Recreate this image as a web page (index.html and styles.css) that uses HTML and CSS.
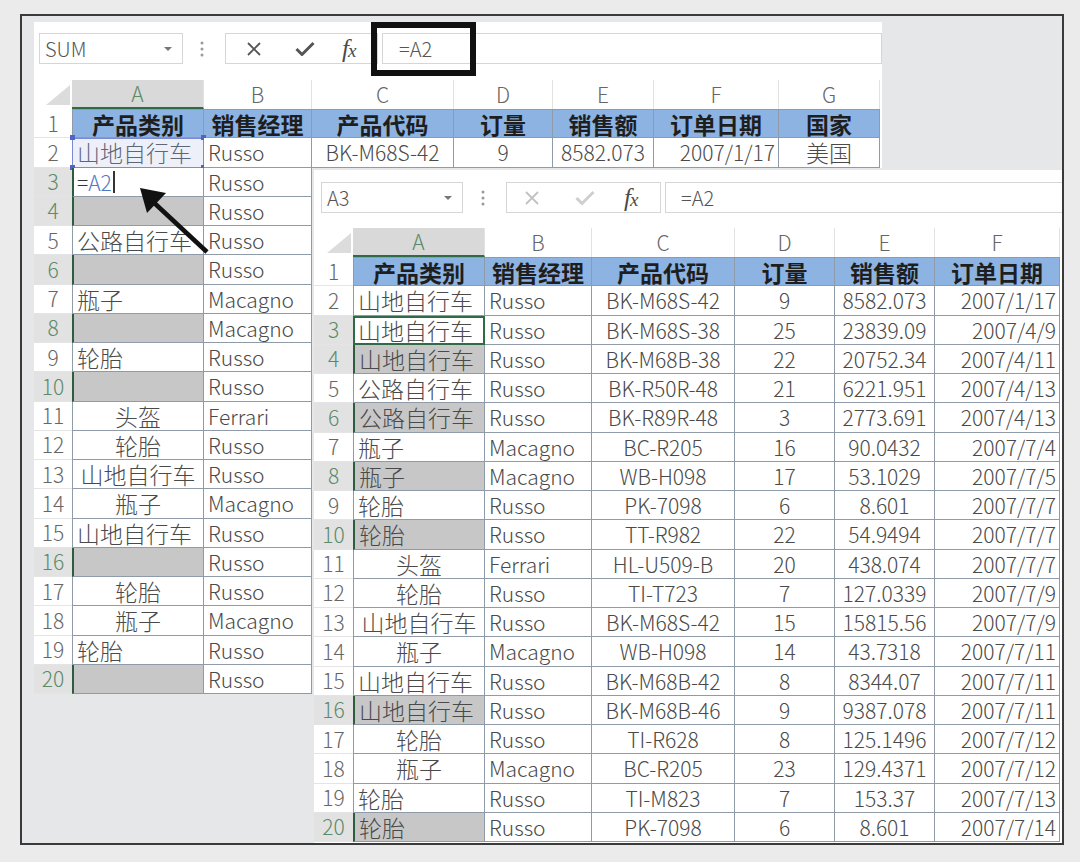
FILE: index.html
```html
<!DOCTYPE html>
<html lang="zh-CN">
<head>
<meta charset="utf-8">
<title>Excel</title>
<link rel="stylesheet" href="styles.css">
</head>
<body>
<div class="frame">
  <div class="sheet1">
    <div class="head">
      <div class="fbar">
        <div class="namebox nb1">SUM<span class="dd"></span></div>
        <svg class="dots d1" width="4" height="16" viewBox="0 0 4 16"><circle cx="2" cy="2" r="1.5"/><circle cx="2" cy="8" r="1.5"/><circle cx="2" cy="14" r="1.5"/></svg>
        <div class="fxbox fx1">
          <svg class="ic-x" width="16" height="16" viewBox="0 0 16 16"><path d="M2 2L14 14M14 2L2 14"/></svg>
          <svg class="ic-ok" width="20" height="16" viewBox="0 0 20 16"><path d="M1.5 8L7 13.5L18.5 2"/></svg>
          <span class="fx">f<span class="fxx">x</span></span>
        </div>
        <div class="finput fi1">=A2</div>
      </div>
      <div class="colhead cols1">
        <div class="corner"></div><div class="h sel">A</div><div class="h">B</div><div class="h">C</div><div class="h">D</div><div class="h">E</div><div class="h">F</div><div class="h">G</div>
      </div>
    </div>
    <div class="r cols1 full"><div class="n">1</div><div class="c th a">产品类别</div><div class="c th">销售经理</div><div class="c th">产品代码</div><div class="c th">订量</div><div class="c th">销售额</div><div class="c th">订单日期</div><div class="c th">国家</div></div>
    <div class="r cols1 full"><div class="n">2</div><div class="c a ref">山地自行车<i class="hd tl"></i><i class="hd tr"></i><i class="hd bl"></i><i class="hd br"></i></div><div class="c e">Russo</div><div class="c e ctr">BK-M68S-42</div><div class="c e ctr">9</div><div class="c e ctr">8582.073</div><div class="c e rt">2007/1/17</div><div class="c ctr">美国</div></div>
    <div class="r cols1"><div class="n s">3</div><div class="c a edit">=<span class="refc">A2</span><span class="caret"></span></div><div class="c e">Russo</div></div>
    <div class="r cols1"><div class="n s">4</div><div class="c a g"></div><div class="c e">Russo</div></div>
    <div class="r cols1"><div class="n">5</div><div class="c a">公路自行车</div><div class="c e">Russo</div></div>
    <div class="r cols1"><div class="n s">6</div><div class="c a g"></div><div class="c e">Russo</div></div>
    <div class="r cols1"><div class="n">7</div><div class="c a">瓶子</div><div class="c e">Macagno</div></div>
    <div class="r cols1"><div class="n s">8</div><div class="c a g"></div><div class="c e">Macagno</div></div>
    <div class="r cols1"><div class="n">9</div><div class="c a">轮胎</div><div class="c e">Russo</div></div>
    <div class="r cols1"><div class="n s">10</div><div class="c a g"></div><div class="c e">Russo</div></div>
    <div class="r cols1"><div class="n">11</div><div class="c a ctr">头盔</div><div class="c e">Ferrari</div></div>
    <div class="r cols1"><div class="n">12</div><div class="c a ctr">轮胎</div><div class="c e">Russo</div></div>
    <div class="r cols1"><div class="n">13</div><div class="c a ctr">山地自行车</div><div class="c e">Russo</div></div>
    <div class="r cols1"><div class="n">14</div><div class="c a ctr">瓶子</div><div class="c e">Macagno</div></div>
    <div class="r cols1"><div class="n">15</div><div class="c a">山地自行车</div><div class="c e">Russo</div></div>
    <div class="r cols1"><div class="n s">16</div><div class="c a g"></div><div class="c e">Russo</div></div>
    <div class="r cols1"><div class="n">17</div><div class="c a ctr">轮胎</div><div class="c e">Russo</div></div>
    <div class="r cols1"><div class="n">18</div><div class="c a ctr">瓶子</div><div class="c e">Macagno</div></div>
    <div class="r cols1"><div class="n">19</div><div class="c a">轮胎</div><div class="c e">Russo</div></div>
    <div class="r cols1"><div class="n s">20</div><div class="c a g"></div><div class="c e">Russo</div></div>

    <div class="ann"></div>
    <svg class="arrow" width="300" height="260" viewBox="0 0 300 260">
      <path d="M173 230L116 177" stroke="#111" stroke-width="4.5" fill="none"/>
      <path d="M106 166L113 191L132 171Z" fill="#111"/>
    </svg>
  </div>

  <div class="sheet2">
    <div class="head h2">
      <div class="fbar">
        <div class="namebox nb2">A3<span class="dd"></span></div>
        <svg class="dots d2" width="4" height="16" viewBox="0 0 4 16"><circle cx="2" cy="2" r="1.5"/><circle cx="2" cy="8" r="1.5"/><circle cx="2" cy="14" r="1.5"/></svg>
        <div class="fxbox fx2">
          <svg class="ic-x off" width="16" height="16" viewBox="0 0 16 16"><path d="M2 2L14 14M14 2L2 14"/></svg>
          <svg class="ic-ok off" width="20" height="16" viewBox="0 0 20 16"><path d="M1.5 8L7 13.5L18.5 2"/></svg>
          <span class="fx">f<span class="fxx">x</span></span>
        </div>
        <div class="finput fi2">=A2</div>
      </div>
      <div class="colhead cols2">
        <div class="corner"></div><div class="h sel">A</div><div class="h">B</div><div class="h">C</div><div class="h">D</div><div class="h">E</div><div class="h">F</div>
      </div>
    </div>
    <div class="r cols2"><div class="n">1</div><div class="c th a">产品类别</div><div class="c th">销售经理</div><div class="c th">产品代码</div><div class="c th">订量</div><div class="c th">销售额</div><div class="c th">订单日期</div></div>
    <div class="r cols2"><div class="n">2</div><div class="c a">山地自行车</div><div class="c e">Russo</div><div class="c e ctr">BK-M68S-42</div><div class="c e ctr">9</div><div class="c e ctr">8582.073</div><div class="c e rt">2007/1/17</div></div>
    <div class="r cols2"><div class="n s">3</div><div class="c a act">山地自行车</div><div class="c e">Russo</div><div class="c e ctr">BK-M68S-38</div><div class="c e ctr">25</div><div class="c e ctr">23839.09</div><div class="c e rt">2007/4/9</div></div>
    <div class="r cols2"><div class="n s">4</div><div class="c a g">山地自行车</div><div class="c e">Russo</div><div class="c e ctr">BK-M68B-38</div><div class="c e ctr">22</div><div class="c e ctr">20752.34</div><div class="c e rt">2007/4/11</div></div>
    <div class="r cols2"><div class="n">5</div><div class="c a">公路自行车</div><div class="c e">Russo</div><div class="c e ctr">BK-R50R-48</div><div class="c e ctr">21</div><div class="c e ctr">6221.951</div><div class="c e rt">2007/4/13</div></div>
    <div class="r cols2"><div class="n s">6</div><div class="c a g">公路自行车</div><div class="c e">Russo</div><div class="c e ctr">BK-R89R-48</div><div class="c e ctr">3</div><div class="c e ctr">2773.691</div><div class="c e rt">2007/4/13</div></div>
    <div class="r cols2"><div class="n">7</div><div class="c a">瓶子</div><div class="c e">Macagno</div><div class="c e ctr">BC-R205</div><div class="c e ctr">16</div><div class="c e ctr">90.0432</div><div class="c e rt">2007/7/4</div></div>
    <div class="r cols2"><div class="n s">8</div><div class="c a g">瓶子</div><div class="c e">Macagno</div><div class="c e ctr">WB-H098</div><div class="c e ctr">17</div><div class="c e ctr">53.1029</div><div class="c e rt">2007/7/5</div></div>
    <div class="r cols2"><div class="n">9</div><div class="c a">轮胎</div><div class="c e">Russo</div><div class="c e ctr">PK-7098</div><div class="c e ctr">6</div><div class="c e ctr">8.601</div><div class="c e rt">2007/7/7</div></div>
    <div class="r cols2"><div class="n s">10</div><div class="c a g">轮胎</div><div class="c e">Russo</div><div class="c e ctr">TT-R982</div><div class="c e ctr">22</div><div class="c e ctr">54.9494</div><div class="c e rt">2007/7/7</div></div>
    <div class="r cols2"><div class="n">11</div><div class="c a ctr">头盔</div><div class="c e">Ferrari</div><div class="c e ctr">HL-U509-B</div><div class="c e ctr">20</div><div class="c e ctr">438.074</div><div class="c e rt">2007/7/7</div></div>
    <div class="r cols2"><div class="n">12</div><div class="c a ctr">轮胎</div><div class="c e">Russo</div><div class="c e ctr">TI-T723</div><div class="c e ctr">7</div><div class="c e ctr">127.0339</div><div class="c e rt">2007/7/9</div></div>
    <div class="r cols2"><div class="n">13</div><div class="c a ctr">山地自行车</div><div class="c e">Russo</div><div class="c e ctr">BK-M68S-42</div><div class="c e ctr">15</div><div class="c e ctr">15815.56</div><div class="c e rt">2007/7/9</div></div>
    <div class="r cols2"><div class="n">14</div><div class="c a ctr">瓶子</div><div class="c e">Macagno</div><div class="c e ctr">WB-H098</div><div class="c e ctr">14</div><div class="c e ctr">43.7318</div><div class="c e rt">2007/7/11</div></div>
    <div class="r cols2"><div class="n">15</div><div class="c a">山地自行车</div><div class="c e">Russo</div><div class="c e ctr">BK-M68B-42</div><div class="c e ctr">8</div><div class="c e ctr">8344.07</div><div class="c e rt">2007/7/11</div></div>
    <div class="r cols2"><div class="n s">16</div><div class="c a g">山地自行车</div><div class="c e">Russo</div><div class="c e ctr">BK-M68B-46</div><div class="c e ctr">9</div><div class="c e ctr">9387.078</div><div class="c e rt">2007/7/11</div></div>
    <div class="r cols2"><div class="n">17</div><div class="c a ctr">轮胎</div><div class="c e">Russo</div><div class="c e ctr">TI-R628</div><div class="c e ctr">8</div><div class="c e ctr">125.1496</div><div class="c e rt">2007/7/12</div></div>
    <div class="r cols2"><div class="n">18</div><div class="c a ctr">瓶子</div><div class="c e">Macagno</div><div class="c e ctr">BC-R205</div><div class="c e ctr">23</div><div class="c e ctr">129.4371</div><div class="c e rt">2007/7/12</div></div>
    <div class="r cols2"><div class="n">19</div><div class="c a">轮胎</div><div class="c e">Russo</div><div class="c e ctr">TI-M823</div><div class="c e ctr">7</div><div class="c e ctr">153.37</div><div class="c e rt">2007/7/13</div></div>
    <div class="r cols2"><div class="n s">20</div><div class="c a g">轮胎</div><div class="c e">Russo</div><div class="c e ctr">PK-7098</div><div class="c e ctr">6</div><div class="c e ctr">8.601</div><div class="c e rt">2007/7/14</div></div>
  </div>
</div>
</body>
</html>
```
FILE: styles.css
```css
* { box-sizing: border-box; }
body {
  margin: 0;
  background: #ebebeb;
  font-family: "Noto Sans CJK SC", "Noto Sans", sans-serif;
  color: #444;
}
.frame {
  position: relative;
  margin: 14px 0 0 20px;
  width: 1044px;
  height: 831px;
  border: 2px solid #3a3a3a;
  background: #e6e7e9;
  overflow: hidden;
  padding: 6px 0 0 12px;
}
.sheet1 {
  position: relative;
  width: 848px;
  display: flex;
  flex-direction: column;
}
.head {
  background: #fff;
  padding-top: 11px;
  display: flex;
  flex-direction: column;
  gap: 16px;
}
.head.h2 { padding-top: 12px; gap: 15px; }
.fbar {
  height: 31px;
  display: flex;
  align-items: center;
}
.namebox {
  position: relative;
  height: 31px;
  border: 1px solid #d6d6d6;
  background: #fff;
  font-size: 20px;
  font-weight: 300;
  line-height: 1;
  color: #555;
  padding-left: 5px;
  display: flex;
  align-items: center;
}
.nb1 { margin-left: 5px; width: 144px; }
.nb2 { margin-left: 7px; width: 142px; }
.dd {
  position: absolute;
  right: 10px;
  top: 13px;
  width: 0;
  height: 0;
  border-left: 4px solid transparent;
  border-right: 4px solid transparent;
  border-top: 4px solid #777;
}
.dots { fill: #9a9a9a; }
.d1 { margin-left: 17px; }
.d2 { margin-left: 18px; }
.fxbox {
  height: 31px;
  border: 1px solid #d6d6d6;
  display: flex;
  align-items: center;
  background: #fff;
}
.fx1 { margin-left: 21px; width: 153px; padding-left: 20px; gap: 33px; }
.fx2 { margin-left: 21px; width: 155px; padding-left: 17px; gap: 35px; }
.ic-x path { stroke: #555; stroke-width: 1.8; fill: none; }
.ic-ok path { stroke: #555; stroke-width: 3; fill: none; stroke-linejoin: round; }
.ic-x.off path { stroke: #c2c2c2; }
.ic-ok.off path { stroke: #cfcfcf; }
.fx {
  font-family: "Liberation Serif", serif;
  font-style: italic;
  font-weight: 400;
  font-size: 25px;
  line-height: 1;
  color: #4a4a4a;
  margin-left: -6px;
  letter-spacing: -1px;
}
.fxx { font-size: 19px; }
.finput {
  height: 31px;
  border: 1px solid #d6d6d6;
  background: #fff;
  font-size: 20px;
  font-weight: 300;
  line-height: 1;
  color: #555;
  display: flex;
  align-items: center;
  flex: 1;
}
.fi1 { margin-left: 4px; padding-left: 16px; }
.fi2 { margin-left: 4px; padding-left: 15px; }

.cols1 { display: grid; grid-template-columns: 38px 132px 108px 142px 99px 101px 125px 101px; }
.cols2 { display: grid; grid-template-columns: 39px 132px 107px 143px 100px 100px 125px; }

.colhead { height: 29px; grid-template-rows: 29px; }
.corner { position: relative; background: #fff; }
.corner::after {
  content: "";
  position: absolute;
  right: 2px;
  bottom: 4px;
  width: 24px;
  height: 20px;
  background: #dcdcdc;
  clip-path: polygon(100% 0, 100% 100%, 0 100%);
}
.h {
  display: flex;
  align-items: center;
  justify-content: center;
  font-size: 21px;
  font-weight: 300;
  line-height: 1;
  color: #666;
  border-right: 1px solid #e2e2e2;
  background: #fff;
}
.h.sel {
  background: #d9d9d9;
  color: #5b8a69;
  border-bottom: 2px solid #2f6b45;
}

.r { height: 29.25px; grid-template-rows: 29.25px; }
.r.full { background: #fff; width: 848px; }
.n {
  display: flex;
  align-items: center;
  justify-content: center;
  font-size: 21px;
  font-weight: 300;
  line-height: 1;
  color: #666;
  background: #fff;
  border-bottom: 1px solid #e4e4e4;
  overflow: hidden;
}
.n.s { background: #e2e2e2; color: #5b8a69; }
.c {
  position: relative;
  display: flex;
  align-items: center;
  padding: 1px 4px 0;
  white-space: nowrap;
  font-size: 23px;
  font-weight: 300;
  line-height: 1;
  color: #4a4a4a;
  background: #fff;
  border-right: 1px solid #8f9ba8;
  border-bottom: 1px solid #8f9ba8;
}
.c.e { font-size: 21px; }
.c.a { border-left: 1px solid #8f9ba8; }
.c.ctr { justify-content: center; }
.c.rt { justify-content: flex-end; padding-right: 3px; }
.c.th {
  background: #8db3e2;
  font-weight: 700;
  color: #1e1e1e;
  justify-content: center;
  border-top: 1px solid #8f9ba8;
}
.c.g {
  background: #c7c7c7;
  border-left: 2px solid #2e5c3f;
}
.c.ref {
  background: #eef0f9;
  color: #5f6677;
  outline: 1px solid #7b8ad3;
  outline-offset: -1px;
}
.hd {
  position: absolute;
  width: 5px;
  height: 5px;
  background: #4f64c4;
}
.hd.tl { left: -3px; top: -3px; }
.hd.tr { right: -3px; top: -3px; }
.hd.bl { left: -3px; bottom: -3px; }
.hd.br { right: -3px; bottom: -3px; }
.c.edit { border-left: 2px solid #2e5c3f; font-size: 21px; color: #333; padding-left: 3px; }
.refc { color: #5478c8; }
.caret {
  display: inline-block;
  width: 2px;
  height: 22px;
  background: #333;
  margin-left: 1px;
}
.c.act {
  border: 2px solid #2f6b45;
  padding-left: 3px;
}

.ann {
  position: absolute;
  left: 337px;
  top: 0;
  width: 105px;
  height: 54px;
  border: 6px solid #111;
}
.arrow {
  position: absolute;
  left: 0;
  top: 0;
  pointer-events: none;
}

.sheet2 {
  position: absolute;
  left: 292px;
  top: 154px;
  width: 750px;
  height: 680px;
  background: #fff;
}
```
